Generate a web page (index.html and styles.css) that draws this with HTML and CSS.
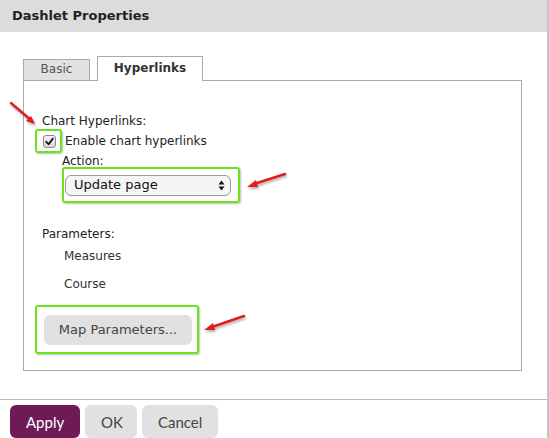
FILE: index.html
```html
<!doctype html>
<html lang="en">
<head>
	<meta charset="UTF-8">
	<title>Dashlet Properties</title>
	<link rel="stylesheet" href="styles.css">
</head>
<body>

	<div class="dialogo">
		<div class="cabecalho">Dashlet Properties</div>

		<div class="corpo">
			<!-- abas -->
			<div class="abas">
				<div class="aba">Basic</div>
				<div class="aba aba-ativa">Hyperlinks</div>
			</div>

			<div class="painel">
				<div class="rotulo">Chart Hyperlinks:</div>
				<div class="linha-check">
					<span class="destaque destaque-check">
						<span class="check">
							<svg width="9" height="9" viewBox="0 0 9 9"><path d="M1.2 4.8 L3.6 7.2 L7.8 1.6" fill="none" stroke="#111" stroke-width="1.8" stroke-linecap="round" stroke-linejoin="round"/></svg>
						</span>
					</span>
					<span class="texto-check">Enable chart hyperlinks</span>
				</div>
				<div class="recuo">
					<div class="rotulo-acao">Action:</div>
					<span class="destaque destaque-select">
						<span class="select">
							<span>Update page</span>
							<svg width="7" height="11" viewBox="0 0 7 11"><path d="M3.5 0.5 L6.5 4.5 L0.5 4.5 Z M3.5 10.5 L6.5 6.5 L0.5 6.5 Z" fill="#111"/></svg>
						</span>
					</span>
				</div>

				<div class="rotulo rotulo-params">Parameters:</div>
				<div class="param">Measures</div>
				<div class="param">Course</div>

				<span class="destaque destaque-botao">
					<span class="botao-map">Map Parameters...</span>
				</span>
			</div>
		</div>

		<div class="rodape">
			<button class="btn btn-apply">Apply</button>
			<button class="btn">OK</button>
			<button class="btn">Cancel</button>
		</div>

		<!-- setas vermelhas -->
		<svg class="seta" style="left: 6px; top: 98px;" width="34" height="30" viewBox="0 0 34 30"><path d="M5 5 L26 23" stroke="#e21b1b" stroke-width="2.4" stroke-linecap="round"/><path d="M29 26 L20 23 L25 18 Z" fill="#e21b1b"/></svg>
		<svg class="seta" style="left: 244px; top: 170px;" width="46" height="22" viewBox="0 0 46 22"><path d="M41 4 L10 14" stroke="#e21b1b" stroke-width="2.6" stroke-linecap="round"/><path d="M3 17 L12 10 L14 17 Z" fill="#e21b1b"/></svg>
		<svg class="seta" style="left: 201px; top: 312px;" width="48" height="24" viewBox="0 0 48 24"><path d="M43 4 L11 15" stroke="#e21b1b" stroke-width="2.6" stroke-linecap="round"/><path d="M3 18 L12 11 L14 18 Z" fill="#e21b1b"/></svg>
	</div>

</body>
</html>
```

FILE: styles.css
```css
* {margin: 0; padding: 0; box-sizing: border-box;}
body {font: normal 12px/1.2 "DejaVu Sans", Verdana, sans-serif; color: #222; background: #fff;}
.dialogo {position: relative; width: 549px; height: 438px; overflow: hidden; border-right: 2px solid #c4c4c4;}
.cabecalho {height: 32px; line-height: 31px; padding-left: 12px; background: #dcdcdc; font-weight: bold; font-size: 13px; color: #222;}

.corpo {padding: 24px 0 0 23px; height: 368px; border-bottom: 1px solid #bdbdbd; width: 547px;}
.abas {display: flex; gap: 7px; align-items: flex-end; height: 24px;}
.aba {height: 21px; width: 67px; border: 1px solid #aaa; border-bottom: 0; background: #e2e2e2; color: #555; text-align: center; line-height: 19px; font-size: 12px;}
.aba-ativa {height: 25px; width: 106px; background: #fff; color: #333; font-weight: bold; line-height: 23px; margin-bottom: -1px; position: relative; z-index: 1;}

.painel {width: 499px; height: 291px; border: 1px solid #aaa; padding: 32px 0 0 11px; display: flex; flex-direction: column; align-items: flex-start;}
.rotulo {padding-left: 7px; height: 16px; line-height: 16px;}
.linha-check {display: flex; align-items: center; height: 24px;}
.destaque {display: inline-flex; align-items: center; border: 2px solid #6ae31c; border-radius: 3px; box-shadow: 1px 1px 2px rgba(0,0,0,0.25);}
.destaque-check {width: 27px; height: 24px; padding-left: 6px;}
.check {width: 13px; height: 13px; border: 1px solid #8a8a8a; border-radius: 3px; background: linear-gradient(#f4f4f4, #d8d8d8); display: flex; align-items: center; justify-content: center;}
.texto-check {margin-left: 3px;}
.recuo {padding-left: 27px; display: flex; flex-direction: column; align-items: flex-start;}
.rotulo-acao {height: 16px; line-height: 16px;}
.destaque-select {width: 178px; height: 36px; padding-left: 1px; margin-top: -2px;}
.select {width: 166px; height: 21px; border: 1px solid #9a9a9a; border-radius: 6px; background: #f5f5f5; display: flex; align-items: center; justify-content: space-between; padding: 0 5px 0 8px; font-size: 13px; color: #111;}
.rotulo-params {margin-top: 23px;}
.param {padding-left: 29px; height: 28px; line-height: 28px; color: #333;}
.destaque-botao {width: 164px; height: 49px; padding-left: 7px; margin-top: 7px;}
.botao-map {width: 148px; height: 30px; border-radius: 6px; background: #e1e1e1; color: #444; font-size: 13px; text-align: center; line-height: 30px;}

.rodape {display: flex; gap: 5px; padding: 5px 0 0 10px;}
.btn {font: normal 15px "Lato", "Open Sans", sans-serif; height: 33px; border: 0; border-radius: 6px; background: #e1e1e1; color: #444; padding: 0 16px;}
.btn-apply {background: #6d1a57; color: #fff; width: 70px;}
.btn:nth-child(2) {width: 52px;}
.btn:nth-child(3) {width: 76px;}

.seta {position: absolute; filter: drop-shadow(1px 2px 1px rgba(0,0,0,0.3));}
```
